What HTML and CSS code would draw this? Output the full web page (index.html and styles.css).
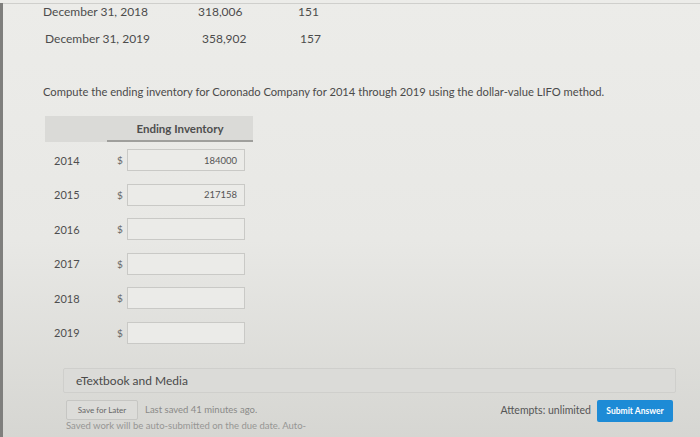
FILE: index.html
```html
<!DOCTYPE html>
<html>
<head>
<meta charset="utf-8">
<link rel="stylesheet" href="styles.css">
</head>
<body>
<div class="screen">
  <div class="data">
    <div class="drow"><span class="date">December 31, 2018</span><span class="amt">318,006</span><span class="idx">151</span></div>
    <div class="drow second"><span class="date">December 31, 2019</span><span class="amt">358,902</span><span class="idx">157</span></div>
  </div>
  <p class="prompt">Compute the ending inventory for Coronado Company for 2014 through 2019 using the dollar-value LIFO method.</p>
  <div class="inv">
    <div class="inv-head"><div class="blank"></div><div class="col">Ending Inventory</div></div>
    <div class="inv-row"><span class="yr">2014</span><span class="cur">$</span><div class="box">184000</div></div>
    <div class="inv-row"><span class="yr">2015</span><span class="cur">$</span><div class="box">217158</div></div>
    <div class="inv-row"><span class="yr">2016</span><span class="cur">$</span><div class="box"></div></div>
    <div class="inv-row"><span class="yr">2017</span><span class="cur">$</span><div class="box"></div></div>
    <div class="inv-row"><span class="yr">2018</span><span class="cur">$</span><div class="box"></div></div>
    <div class="inv-row"><span class="yr">2019</span><span class="cur">$</span><div class="box"></div></div>
  </div>
  <div class="media"><span class="media-label">eTextbook and Media</span></div>
  <div class="footer">
    <div class="left">
      <div class="saveline"><span class="save">Save for Later</span><span class="last">Last saved 41 minutes ago.</span></div>
      <div class="auto">Saved work will be auto-submitted on the due date. Auto-</div>
    </div>
    <div class="right">
      <span class="attempts">Attempts: unlimited</span>
      <span class="submit">Submit Answer</span>
    </div>
  </div>
</div>
</body>
</html>
```

FILE: styles.css
```css
html, body {
  margin: 0;
  padding: 0;
  width: 700px;
  height: 437px;
  overflow: hidden;
}
body {
  font-family: Lato, "Open Sans", sans-serif;
  color: #4a4a4a;
  background: linear-gradient(#ecece9 0%, #e8e8e5 55%, #d6d6d2 100%);
}
.screen {
  height: 437px;
  box-sizing: border-box;
  border-left: 3px solid #7f7f7d;
}
.data {
  border-top: 1px solid #cfcfcc;
  margin-top: 3px;
}
.drow {
  display: flex;
  align-items: center;
  height: 15px;
  font-size: 12px;
  color: #4c4c4c;
}
.drow.second {
  margin-top: 12px;
}
.date {
  width: 155px;
  padding-left: 40px;
}
.second .date { padding-left: 42px; }
.amt {
  width: 100px;
}
.second .amt { width: 98px; padding-left: 2px; }
.idx {
  width: 30px;
}
.prompt {
  margin: 39px 0 0 40px;
  font-size: 11.2px;
  line-height: 14px;
  color: #4a4a4a;
}
.inv {
  margin: 17px 0 0 42px;
  width: 208px;
}
.inv-head {
  display: flex;
  height: 26px;
  background: #dadad7;
}
.inv-head .blank { width: 62px; }
.inv-head .col {
  flex: 1;
  display: flex;
  align-items: center;
  justify-content: center;
  font-size: 11.5px;
  font-weight: bold;
  color: #4e4e4e;
  border-bottom: 2px solid #9f9f9c;
  box-sizing: border-box;
}
.inv-row {
  display: flex;
  align-items: center;
  height: 22px;
  margin-top: 12.6px;
}
.inv-head + .inv-row { margin-top: 7px; }
.yr {
  width: 62px;
  padding-left: 9px;
  box-sizing: border-box;
  font-size: 11px;
  color: #4e4e4e;
}
.cur {
  width: 20px;
  padding-left: 10px;
  box-sizing: border-box;
  font-size: 10px;
  color: #666;
}
.box {
  width: 118px;
  height: 22px;
  box-sizing: border-box;
  border: 1px solid #c9c9c6;
  background: #ebebe8;
  display: flex;
  align-items: center;
  justify-content: flex-end;
  padding-right: 7px;
  font-size: 9.5px;
  color: #555;
}
.media {
  margin: 24px 0 0 60px;
  width: 613px;
  height: 25px;
  box-sizing: border-box;
  background: #dbdbd8;
  border: 1px solid #cfcfcc;
  border-radius: 2px;
  display: flex;
  align-items: center;
}
.media-label {
  margin-left: 12px;
  font-size: 12px;
  color: #4a4a4a;
}
.footer {
  display: flex;
  justify-content: space-between;
  margin: 7px 0 0 63px;
  width: 607px;
}
.saveline {
  display: flex;
  align-items: center;
}
.save {
  height: 20px;
  width: 72px;
  box-sizing: border-box;
  border: 1px solid #c6c6c3;
  border-radius: 2px;
  display: flex;
  align-items: center;
  justify-content: center;
  font-size: 8px;
  color: #666;
  background: #dcdcd9;
}
.last {
  margin-left: 7px;
  font-size: 9.5px;
  color: #8a8a88;
}
.auto {
  font-size: 9.5px;
  color: #969694;
  line-height: 12px;
}
.right {
  display: flex;
  align-items: flex-start;
}
.attempts {
  margin-top: 4px;
  font-size: 10.5px;
  color: #555;
  margin-right: 6px;
}
.submit {
  width: 76px;
  height: 22px;
  background: #1d8bd6;
  border-radius: 2px;
  color: #fff;
  font-size: 8.5px;
  font-weight: bold;
  display: flex;
  align-items: center;
  justify-content: center;
}
```
